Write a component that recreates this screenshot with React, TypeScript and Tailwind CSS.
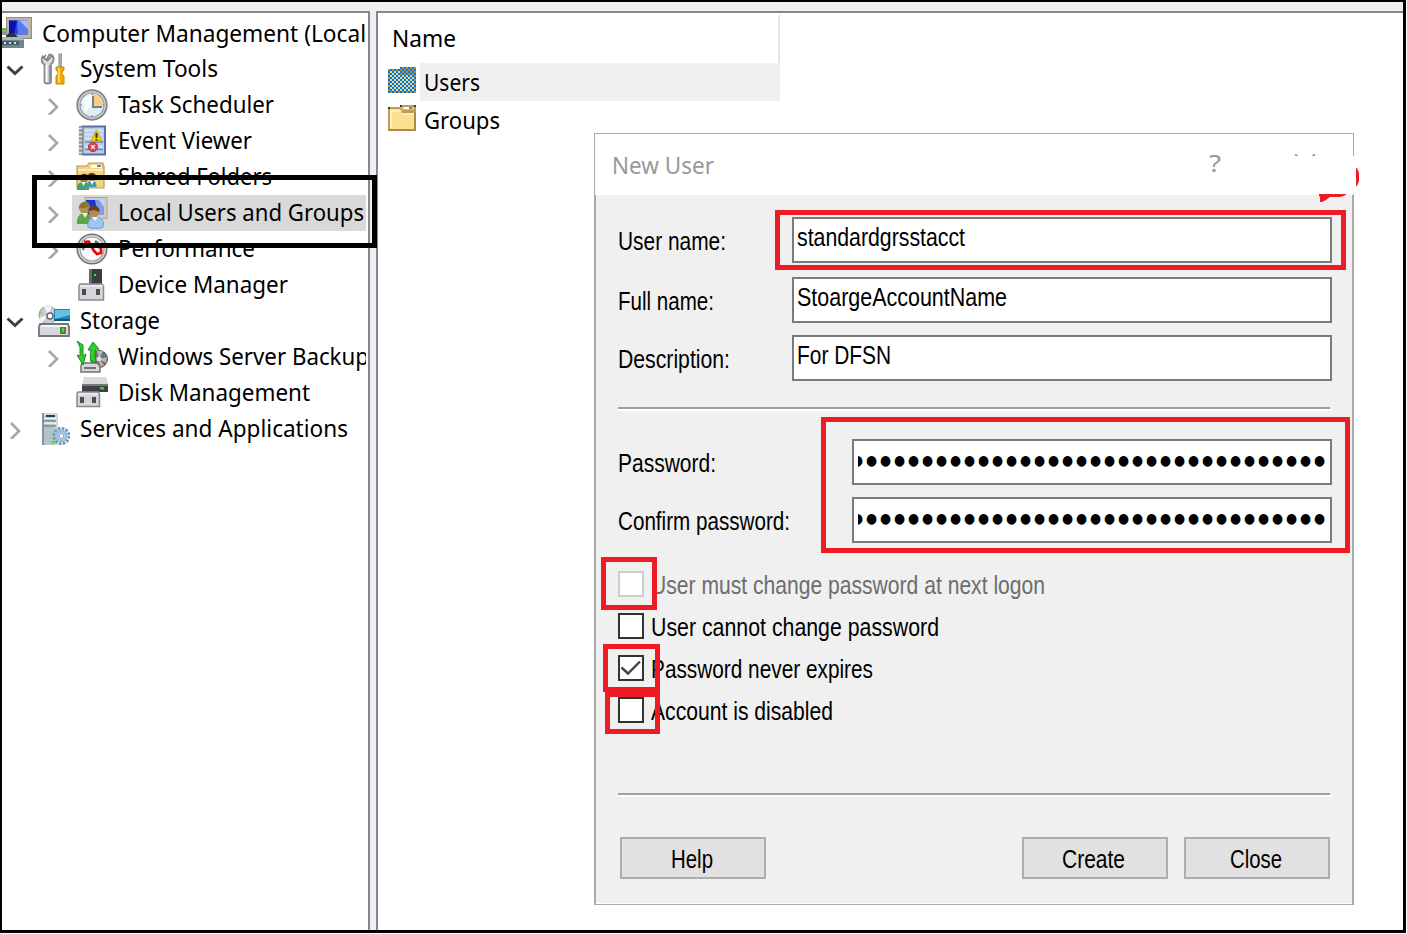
import { useLayoutEffect, useRef, type ReactNode } from "react";
import clsx from "clsx";

/** One line of text, condensed horizontally so that it takes `w` pixels. */
function Fit({ w, className, children }: { w: number; className?: string; children: string }) {
  const ref = useRef<HTMLSpanElement>(null);
  useLayoutEffect(() => {
    const el = ref.current;
    if (!el) return;
    el.style.transform = "none";
    const natural = el.getBoundingClientRect().width;
    el.style.transform = `scaleX(${w / natural})`;
  }, [w, children]);
  return (
    <span className={clsx("block shrink-0", className)} style={{ width: w }}>
      <span ref={ref} className="inline-block origin-left whitespace-pre">
        {children}
      </span>
    </span>
  );
}

function Svg({ children, className }: { children: ReactNode; className?: string }) {
  return (
    <svg viewBox="0 0 32 32" className={clsx("h-8 w-8 shrink-0", className)}>
      {children}
    </svg>
  );
}

const ComputerIcon = () => (
  <Svg>
    <rect x="6.500" y="0.500" width="25" height="21" fill="#b9b6a8" stroke="#8f8d83" />
    <rect x="9" y="3.500" width="19" height="14" fill="#2a43dc" />
    <path d="M9 3.500h8l-3 14H9z" fill="#0a10b4" />
    <path d="M19 3.500h9v9z" fill="#a9bcf6" />
    <path d="M17 3.500h2l9 9v5h-10z" fill="#5c7bea" />
    <path d="M6 19l3-3h5l4 4H6z" fill="#2d3133" />
    <rect x="0" y="11" width="6" height="7" fill="#8e979b" />
    <rect x="2" y="13" width="4" height="2" fill="#4be31b" />
    <path d="M0 20h21l3 3v8H0z" fill="#6f8590" />
    <path d="M0 20h21l3 3H0z" fill="#a9b8c0" />
    <rect x="2" y="24" width="17" height="4" fill="#4a5b66" />
    <path d="M4 26h2M9 26h2M14 26h2" stroke="#d3dde2" strokeWidth="2" />
  </Svg>
);

const ToolsIcon = () => (
  <Svg>
    <path
      d="M4.500 3.500l4 3.500 3-5.500c3 .5 4.500 3 4 6-.4 2-1.500 3-2.500 3.500V29c0 2-6.500 2-6.500 0V11.500C4 10 3 7 4.500 3.500z"
      fill="#dcdcdc"
      stroke="#85878a"
      strokeWidth="1.800"
    />
    <path d="M8.500 12v17" stroke="#fff" strokeWidth="1.500" />
    <path d="M11.500 12v17" stroke="#909294" strokeWidth="1.500" />
    <path d="M5 5l3-3M9 8l5-5" stroke="#77797b" strokeWidth="1.500" />
    <path d="M21 1h2.500l-.5 14h-2z" fill="#b9bcbe" stroke="#85878a" strokeWidth="1" />
    <path d="M18 14h8v3l-2 2v2l2 2v8h-8v-8l2-2v-2l-2-2z" fill="#f0a900" stroke="#c98a00" strokeWidth="1" />
    <path d="M21 15v15" stroke="#ffdb5c" strokeWidth="1.800" />
  </Svg>
);

const ClockIcon = () => (
  <Svg>
    <circle cx="16" cy="16" r="14.800" fill="#d0d2d4" stroke="#828486" strokeWidth="1.800" />
    <circle cx="16" cy="16" r="12" fill="#e3edf6" stroke="#9ba0a6" strokeWidth="1.200" />
    <path d="M17 16V5a11 11 0 0 1 10 12z" fill="#f2cf86" />
    <path d="M7 10l9-6v12L9 24z" fill="#f7fafd" />
    <path d="M17 7v11h9" fill="none" stroke="#747f8a" strokeWidth="2" />
    <path d="M16 26v2M4 16h2M16 4v2M27 16h1" stroke="#8a94a0" strokeWidth="1.500" />
  </Svg>
);

const EventIcon = () => (
  <Svg>
    <rect x="6.500" y="1.500" width="22.500" height="28" fill="#b9cce8" stroke="#5570ab" strokeWidth="2" />
    <path d="M9 5.500h18M9 9.500h18M9 13.500h18M9 21.500h18" stroke="#d3e2f4" strokeWidth="2" />
    <path d="M9 17h18M9 24.500h18" stroke="#6986b8" strokeWidth="1.500" />
    <rect x="3" y="1" width="4" height="29" fill="#8d9196" />
    <path d="M2 3.500h4M2 7.500h4M2 11.500h4M2 15.500h4M2 19.500h4M2 23.500h4M2 27.500h4" stroke="#dfe2e5" strokeWidth="1.500" />
    <path d="M20.500 5l5.500 11H15z" fill="#f5d21b" stroke="#c7a613" />
    <path d="M20.500 8v5M20.500 14v1.500" stroke="#3f3a10" strokeWidth="2" />
    <circle cx="17" cy="22" r="4.600" fill="#d94652" stroke="#b93542" />
    <path d="M15.300 20.300l3.400 3.400M18.700 20.300l-3.400 3.400" stroke="#fbe7e8" strokeWidth="1.400" />
  </Svg>
);

const SharedIcon = () => (
  <Svg>
    <path d="M1 7V5h10l2-3h14v3h1v22H1z" fill="#f2d582" stroke="#bd964a" strokeWidth="1.200" />
    <rect x="15" y="4" width="11" height="3" fill="#fff" />
    <rect x="21" y="4" width="4" height="2" fill="#3e8fe0" />
    <path d="M2 9h25" stroke="#fff0bd" strokeWidth="1.500" />
    <circle cx="8" cy="17.500" r="4" fill="#a67640" />
    <path d="M4 16c1-4 7-4 8-1l-2 2z" fill="#543516" />
    <path d="M1 29c0-6 2-8 6.500-8s5.500 3 5.500 8z" fill="#44a06c" />
    <path d="M5.500 21l2 4 2-4z" fill="#fff" />
    <circle cx="16" cy="16" r="4" fill="#ba7140" />
    <path d="M12 15c0-4 8-4 8 1l-3-1z" fill="#573011" />
    <path d="M10 26c1-5 2-6 6-6s4.500 3 4.500 6z" fill="#35a0b5" />
    <path d="M14 20l2 4 2-4z" fill="#fff" />
  </Svg>
);

const LocalUsersIcon = () => (
  <Svg>
    <path d="M9 .5h22v21H9z" fill="#cfcdc2" stroke="#a9a79c" />
    <rect x="10" y="3" width="18" height="15" fill="#1836d6" />
    <path d="M19 3h9v15h-6z" fill="#7c9cf0" />
    <path d="M23 3h5v7z" fill="#c3d2fa" />
    <circle cx="8.500" cy="11" r="5.500" fill="#ab9153" />
    <path d="M3 11c0-8 11-8 11-2l-5 2z" fill="#8b743a" />
    <path d="M1 27c-1-8 4-11 8-11s8 4 7 11z" fill="#61a24c" />
    <path d="M6 16l3 5 3-5z" fill="#e7f0dd" />
    <circle cx="18" cy="15" r="5.200" fill="#bd8456" />
    <path d="M12.500 14c0-8 12-7 11 1l-5-2z" fill="#60401f" />
    <path d="M12 30c-1-7 3-10 8-10s9 4 7 10c-2 2-13 2-15 0z" fill="#a0c5ea" stroke="#6c9dd0" />
    <path d="M16 20l3 4 3-4z" fill="#f3f8fc" />
  </Svg>
);

const PerformanceIcon = () => (
  <Svg>
    <circle cx="16" cy="16" r="14.800" fill="#d6d8d6" stroke="#727472" strokeWidth="1.600" />
    <circle cx="16" cy="16" r="12" fill="#f8f9f8" stroke="#9b9d9b" strokeWidth="1.200" />
    <path d="M7 17l1-5 5-4M19 8l4 3v4" fill="none" stroke="#5e7966" strokeWidth="2.500" />
    <path d="M8 9l5 0 5 9 3 3 4-1 0-5-4-2" fill="none" stroke="#e20a0a" strokeWidth="2.800" />
  </Svg>
);

const DeviceIcon = () => (
  <Svg>
    <rect x="13" y="0" width="13" height="16" fill="#3b3d3e" />
    <rect x="13" y="0" width="3" height="16" fill="#66696b" />
    <rect x="18" y="5" width="2" height="2" fill="#2cf52c" />
    <path d="M4 15h22l1.500 2v14H3V17z" fill="#d5d6d9" stroke="#8b8c90" strokeWidth="1.500" />
    <path d="M4 17h23" stroke="#fff" strokeWidth="1" />
    <path d="M8 20v6M22 20v6" stroke="#4a4c50" strokeWidth="4" />
  </Svg>
);

const StorageIcon = () => (
  <Svg>
    <circle cx="10" cy="10" r="9" fill="#c9ccce" stroke="#909496" />
    <path d="M10 10L6 1l8 0zM10 10l-9 3 3 5z" fill="#f2f3f3" />
    <path d="M2 6l3 2-3 2z" fill="#8cdc5d" />
    <circle cx="12" cy="11" r="3" fill="#fff" stroke="#63676a" strokeWidth="1.500" />
    <rect x="16" y="4" width="16" height="12" fill="#1d86b8" />
    <path d="M17 5h15v5l-15 4z" fill="#66bfe2" />
    <rect x="16" y="14" width="16" height="2" fill="#12587c" />
    <path d="M2 19h28l1 3v9H1v-9z" fill="#d8d9e0" stroke="#72757b" strokeWidth="1.800" />
    <path d="M3 21h26" stroke="#fff" strokeWidth="1.500" />
    <rect x="22" y="22" width="6" height="7" fill="#55813f" />
    <rect x="24" y="23" width="2" height="4" fill="#32e522" />
  </Svg>
);

const BackupIcon = () => (
  <Svg>
    <circle cx="23" cy="18" r="8.500" fill="#6f7275" stroke="#4f5254" />
    <path d="M23 18l-2-8 6 0zM23 18l8-2-1 6z" fill="#b5b8ba" />
    <path d="M23 18l5 6-4 2z" fill="#f3a47c" />
    <circle cx="23" cy="18" r="2.500" fill="#dadcdd" />
    <path d="M6 22h15l3 3v6H5v-6z" fill="#d5d7d9" stroke="#707376" strokeWidth="1.500" />
    <path d="M8 27h12" stroke="#717476" strokeWidth="2" />
    <path d="M1 0l6 4v11l3-2-3 11L1 14l3 1V6z" fill="#2fd22b" stroke="#23881f" strokeWidth="1" />
    <path d="M17 1l6 7h-3c-2 5-1 9 0 14l-5-2c-1-4-1-8 0-11h-3z" fill="#2fd22b" stroke="#23881f" strokeWidth="1" />
  </Svg>
);

const DiskIcon = () => (
  <Svg>
    <path d="M8 0h22l2 7H6z" fill="#d9dadc" />
    <rect x="6" y="7" width="26" height="8" fill="#3e4042" />
    <rect x="6" y="7" width="26" height="2" fill="#77797b" />
    <rect x="24" y="10" width="4" height="2.500" fill="#31d62a" />
    <path d="M2 15h20.500l1 2v12.500H1V17z" fill="#d4d5d9" stroke="#87898e" strokeWidth="1.500" />
    <path d="M2 17h20" stroke="#fff" />
    <path d="M6 20v6M18 20v6" stroke="#4a4c50" strokeWidth="4" />
  </Svg>
);

const ServicesIcon = () => (
  <Svg>
    <path d="M4 0h16v32H4z" fill="#b4c2c9" />
    <path d="M4 0h2v32H4z" fill="#8195a0" />
    <path d="M6 0h14v32h-3V3H6z" fill="#cfd8dc" />
    <rect x="8" y="2" width="9" height="2" fill="#1f4552" />
    <path d="M6 8h12M6 13h12" stroke="#7b8d97" strokeWidth="1.600" />
    <path d="M6 10h12M6 5.500h12" stroke="#f4f7f8" strokeWidth="1.500" />
    <rect x="13" y="28" width="4" height="2.500" fill="#66dc3a" />
    <circle cx="23.500" cy="23" r="7.500" fill="none" stroke="#7096bd" strokeWidth="3" strokeDasharray="2.600 1.327" />
    <circle cx="23.500" cy="23" r="4.800" fill="#d7e7f5" stroke="#9dbcdb" strokeWidth="3.200" />
    <circle cx="23.500" cy="23" r="2.300" fill="#fff" stroke="#7c9dbf" />
  </Svg>
);

const FolderIcon = () => (
  <svg viewBox="0 0 28 26" className="h-[26px] w-7 shrink-0">
    <path d="M0 2h12V0h16v26H0z" fill="#c19c53" />
    <path d="M2 4h10l2 4h12v16H2z" fill="#fbdf92" />
    <path d="M3 5v18" stroke="#fff2c6" strokeWidth="2" />
    <path d="M4 6h9M14 9h12" stroke="#fff2c6" strokeWidth="1.500" />
    <path d="M12 2h14v3H14z" fill="#e5c173" />
    <rect x="16" y="2" width="8" height="2" fill="#fff" />
    <rect x="21" y="2" width="3" height="2" fill="#3e8fe0" />
    <path d="M0 2h2v2H0zM12 0h2v2h-2zM26 0h2v2h-2z" fill="#4b3a1c" />
    <path d="M0 25h28M27 8v18" stroke="#ad8a44" strokeWidth="2" />
  </svg>
);

const SelectedFolderIcon = () => (
  <svg viewBox="0 0 28 26" className="h-[26px] w-7 shrink-0" shapeRendering="crispEdges">
    <defs>
      <pattern id="dither" width="4" height="4" patternUnits="userSpaceOnUse">
        <rect width="4" height="4" fill="#efd68f" />
        <rect width="2" height="2" fill="#0078d7" />
        <rect x="2" y="2" width="2" height="2" fill="#0078d7" />
      </pattern>
      <pattern id="ditherEdge" width="4" height="4" patternUnits="userSpaceOnUse">
        <rect width="4" height="4" fill="#b08e4a" />
        <rect width="2" height="2" fill="#0078d7" />
        <rect x="2" y="2" width="2" height="2" fill="#0078d7" />
      </pattern>
    </defs>
    <path d="M0 2h12V0h16v26H0z" fill="url(#ditherEdge)" />
    <path d="M2 4h10v4h14v16H2z" fill="url(#dither)" />
  </svg>
);

function Chevron({ state }: { state: "open" | "closed" | "none" }) {
  return (
    <svg viewBox="0 0 20 20" className="h-5 w-5 shrink-0" fill="none">
      {state === "open" && <path d="M2.500 7.500l7.500 7 7.500-7" stroke="#404040" strokeWidth="3" />}
      {state === "closed" && <path d="M6 4l8 8-8 8" stroke="#a6a6a6" strokeWidth="2.600" />}
    </svg>
  );
}

type Node = {
  label: string;
  w: number;
  level: 1 | 2;
  state: "open" | "closed" | "none";
  icon: ReactNode;
  selected?: boolean;
};

const nodes: Node[] = [
  { label: "System Tools", w: 138, level: 1, state: "open", icon: <ToolsIcon /> },
  { label: "Task Scheduler", w: 156, level: 2, state: "closed", icon: <ClockIcon /> },
  { label: "Event Viewer", w: 134, level: 2, state: "closed", icon: <EventIcon /> },
  { label: "Shared Folders", w: 154, level: 2, state: "closed", icon: <SharedIcon /> },
  { label: "Local Users and Groups", w: 246, level: 2, state: "closed", icon: <LocalUsersIcon />, selected: true },
  { label: "Performance", w: 137, level: 2, state: "closed", icon: <PerformanceIcon /> },
  { label: "Device Manager", w: 170, level: 2, state: "none", icon: <DeviceIcon /> },
  { label: "Storage", w: 80, level: 1, state: "open", icon: <StorageIcon /> },
  { label: "Windows Server Backup", w: 251, level: 2, state: "closed", icon: <BackupIcon /> },
  { label: "Disk Management", w: 192, level: 2, state: "none", icon: <DiskIcon /> },
  { label: "Services and Applications", w: 268, level: 1, state: "closed", icon: <ServicesIcon /> },
];

function Tree() {
  return (
    <div className="flex w-[368px] shrink-0 flex-col overflow-hidden border-t-2 border-r-2 border-[#828790] bg-white pt-0.5">
      <div className="mr-0.5 flex h-9 items-center overflow-hidden">
        <div className="-ml-0.5 flex items-center gap-[10px]">
          <ComputerIcon />
          <Fit w={324} className="leading-[34px]">Computer Management (Local</Fit>
        </div>
      </div>
      {nodes.map((n) => (
        <div
          key={n.label}
          className={clsx("mr-0.5 flex h-9 items-center overflow-hidden", n.level === 1 ? "pl-[3px]" : "pl-[41px]")}
        >
          <Chevron state={n.state} />
          <div
            className={clsx(
              "ml-[9px] flex h-9 grow items-center gap-[10px] pl-1",
              n.selected && "bg-[#d9d9d9]",
            )}
          >
            {n.icon}
            <Fit w={n.w} className="-mt-0.5 leading-[34px]">{n.label}</Fit>
          </div>
        </div>
      ))}
    </div>
  );
}

function ListPane() {
  return (
    <div className="ml-1.5 grow border-t-2 border-l-2 border-[#828790] bg-white">
      <div className="mt-0.5 flex h-12 w-[402px] items-center border-r-2 border-[#e5e5e5] pl-[14px]">
        <Fit w={64} className="-mt-0.5 leading-[46px]">Name</Fit>
      </div>
      <div className="flex h-[38px] items-center pl-[10px]">
        <div className="-mt-1"><SelectedFolderIcon /></div>
        <div className="ml-1 flex h-[38px] w-[360px] items-center bg-[#f0f0f0] pl-1">
          <Fit w={56} className="leading-[38px]">Users</Fit>
        </div>
      </div>
      <div className="flex h-[38px] items-center pl-[10px]">
        <div className="-mt-1"><FolderIcon /></div>
        <Fit w={76} className="ml-2 leading-[38px]">Groups</Fit>
      </div>
    </div>
  );
}

function Field({ label, lw, value, vw }: { label: string; lw: number; value: string; vw: number }) {
  return (
    <div className="flex h-[46px] items-center justify-between">
      <Fit w={lw} className="pt-0.5">{label}</Fit>
      <div className="flex h-[46px] w-[540px] items-start border-2 border-[#7a7a7a] bg-white pl-[3px]">
        <Fit w={vw} className="leading-[36px]">{value}</Fit>
      </div>
    </div>
  );
}

function PasswordField({ label, lw }: { label: string; lw: number }) {
  return (
    <div className="flex h-[46px] items-center justify-between">
      <Fit w={lw} className="pt-0.5">{label}</Fit>
      <div className="h-[46px] w-[480px] border-2 border-[#7a7a7a] bg-white px-1">
        <div className="flex h-[38px] justify-end overflow-hidden font-['DejaVu_Sans'] text-[14px] tracking-[3.22px]">
          <Fit w={476} className="-mr-[1.500px] leading-[38px]">{"●".repeat(34)}</Fit>
        </div>
      </div>
    </div>
  );
}

function Check({ label, w, checked, disabled }: { label: string; w: number; checked?: boolean; disabled?: boolean }) {
  return (
    <div className="flex h-[42px] items-center gap-[7px]">
      <div
        className={clsx(
          "flex h-[26px] w-[26px] items-center justify-center border-2 bg-white",
          disabled ? "border-[#cccccc]" : "border-[#333333]",
        )}
      >
        {checked && (
          <svg viewBox="0 0 22 22" className="h-[22px] w-[22px]" fill="none">
            <path d="M1.500 10.500l6.500 6L20 4.500" stroke="#444" strokeWidth="2.400" />
          </svg>
        )}
      </div>
      <Fit w={w} className={clsx("pt-0.5", disabled && "text-[#6d6d6d]")}>{label}</Fit>
    </div>
  );
}

function Rule() {
  return (
    <div className="h-1 shrink-0">
      <div className="mr-0.5 h-0.5 bg-[#a0a0a0]" />
      <div className="h-0.5 bg-white" />
    </div>
  );
}

function Button({ children, w }: { children: string; w: number }) {
  return (
    <button className="flex h-[42px] w-[146px] items-center justify-center border-2 border-[#adadad] bg-[#e1e1e1] pt-0.5 pr-[3px]">
      <Fit w={w}>{children}</Fit>
    </button>
  );
}

function Dialog() {
  return (
    <div className="absolute top-[133px] left-[594px] flex h-[772px] w-[760px] flex-col font-['Liberation_Sans'] text-[25px] leading-[30px] text-black">
      <div className="flex h-[62px] shrink-0 items-center border border-b-0 border-[#aaaaaa] bg-white pl-[17px] font-['Noto_Sans'] text-[24px] text-[#999999]">
        <Fit w={102}>New User</Fit>
        <Fit w={12} className="ml-[495px] -mt-1">?</Fit>
        <svg viewBox="0 0 20 20" className="-mt-0.5 ml-[74px] h-5 w-5" fill="none">
          <path d="M0 0l20 20M20 0L0 20" stroke="#999" strokeWidth="2" />
        </svg>
      </div>
      <div className="flex grow flex-col border-x-2 border-b border-[#aaaaaa] bg-[#f0f0f0] pr-5 pl-[22px] shadow-[inset_0_-1px_0_#fff]">
        <div className="mt-[22px] flex flex-col">
          <Field label="User name:" lw={108} value="standardgrsstacct" vw={168} />
          <div className="h-[14px]" />
          <Field label="Full name:" lw={96} value="StoargeAccountName" vw={210} />
          <div className="h-3" />
          <Field label="Description:" lw={112} value="For DFSN" vw={94} />
        </div>
        <div className="mt-[26px]"><Rule /></div>
        <div className="mt-7 flex flex-col gap-3">
          <PasswordField label="Password:" lw={98} />
          <PasswordField label="Confirm password:" lw={172} />
        </div>
        <div className="mt-5 flex flex-col">
          <Check label="User must change password at next logon" w={394} disabled />
          <Check label="User cannot change password" w={288} />
          <Check label="Password never expires" w={222} checked />
          <Check label="Account is disabled" w={182} />
        </div>
        <div className="mt-[62px]"><Rule /></div>
        <div className="mt-10 flex gap-4 pr-0.5 pl-0.5">
          <Button w={42}>Help</Button>
          <div className="grow" />
          <Button w={63}>Create</Button>
          <Button w={52}>Close</Button>
        </div>
      </div>
    </div>
  );
}

/** Highlight boxes and pen marks drawn over the windows. */
function Annotations() {
  return (
    <>
      <div className="absolute top-[175px] left-8 h-[73px] w-[345px] border-[5px] border-black" />
      <div className="absolute top-[210px] left-[775px] h-[60px] w-[571px] border-[5px] border-[#ed1c24]" />
      <div className="absolute top-[417px] left-[821px] h-[136px] w-[529px] border-[5px] border-[#ed1c24]" />
      <div className="absolute top-[557px] left-[601px] h-[53px] w-[56px] border-[5px] border-[#ed1c24]" />
      <div className="absolute top-[644px] left-[603px] h-[48px] w-[57px] border-[5px] border-[#ed1c24]" />
      <div className="absolute top-[692px] left-[605px] h-[42px] w-[55px] border-[5px] border-[#ed1c24]" />
      <div className="absolute top-[156px] left-[1270px] h-[38px] w-[86px] bg-white" />
      <svg viewBox="0 0 50 50" className="absolute top-[160px] left-[1315px] h-[50px] w-[50px]">
        <path d="M41 8h1l2 5v8l-2 5h-1z" fill="#ed1c24" />
        <path d="M4 34h27v1l-6 2h-10l-4 3-4 2H5v-5l-1-1z" fill="#ed1c24" />
      </svg>
    </>
  );
}

export default function App() {
  return (
    <div className="relative h-[934px] w-[1407px] overflow-hidden bg-white pr-px pb-px font-['Noto_Sans',sans-serif] text-[24px] text-black">
      <div className="flex h-[933px] w-[1406px] border-t-2 border-r-[3px] border-b-[3px] border-l-2 border-black bg-[#f0f0f0] pt-[9px]">
        <Tree />
        <ListPane />
      </div>
      <Dialog />
      <Annotations />
    </div>
  );
}
